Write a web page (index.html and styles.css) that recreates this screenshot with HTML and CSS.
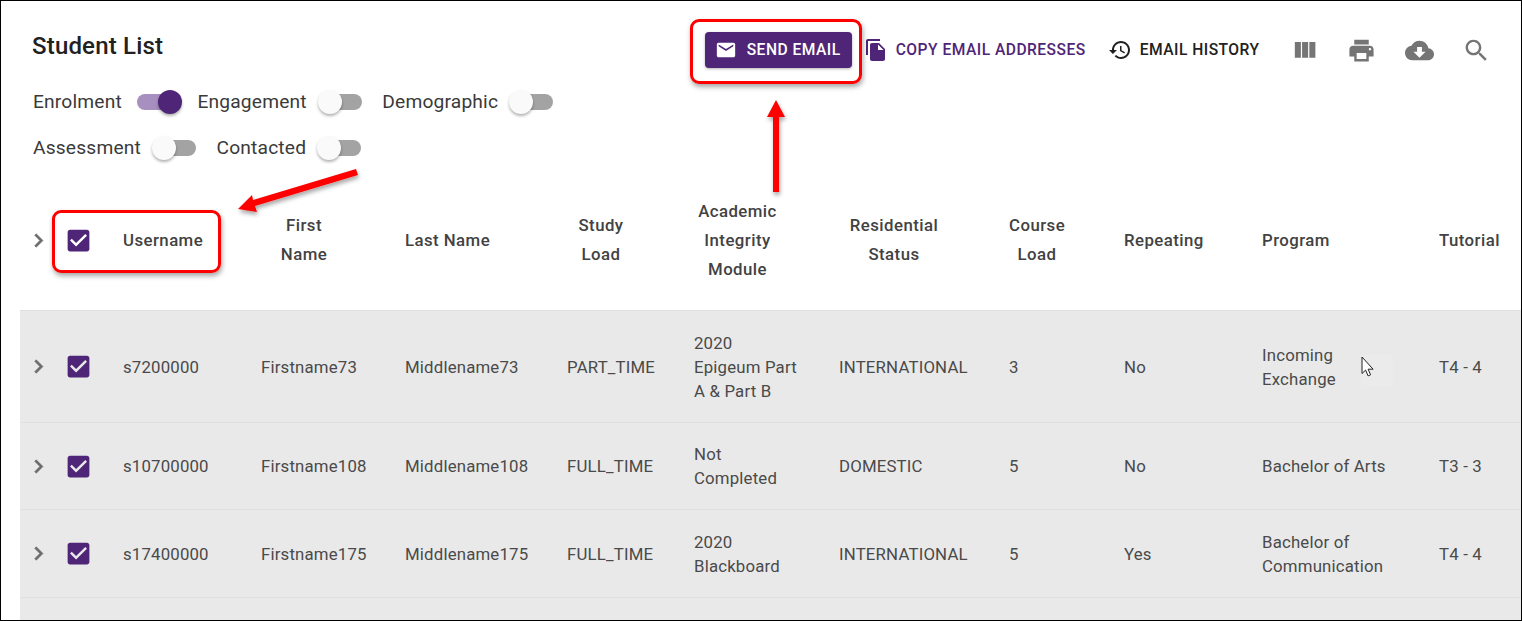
FILE: index.html
```html
<!DOCTYPE html>
<html lang="en">
<head>
<meta charset="utf-8">
<title>Student List</title>
<link rel="stylesheet" href="styles.css">
</head>
<body>
<svg class="defs" width="0" height="0" aria-hidden="true">
  <symbol id="i-check" viewBox="0 0 24 24"><path d="M19 3H5c-1.11 0-2 .9-2 2v14c0 1.1.89 2 2 2h14c1.11 0 2-.9 2-2V5c0-1.1-.89-2-2-2zm-9 14l-5-5 1.41-1.41L10 14.17l7.59-7.59L19 8l-9 9z"/></symbol>
  <symbol id="i-chev" viewBox="0 0 24 24"><path d="M10 6L8.59 7.41 13.17 12l-4.58 4.59L10 18l6-6z"/></symbol>
</svg>
<main class="frame">
  <section class="top">
    <div class="left">
      <h1 class="title">Student List</h1>
      <div class="toggles">
        <label class="tog">Enrolment<span class="switch on"><i></i></span></label>
        <label class="tog">Engagement<span class="switch"><i></i></span></label>
        <label class="tog">Demographic<span class="switch"><i></i></span></label>
      </div>
      <div class="toggles">
        <label class="tog">Assessment<span class="switch"><i></i></span></label>
        <label class="tog">Contacted<span class="switch"><i></i></span></label>
      </div>
    </div>
    <div class="actions">
      <button class="btn primary"><svg viewBox="0 0 24 24"><path d="M20 4H4c-1.1 0-1.99.9-1.99 2L2 18c0 1.1.9 2 2 2h16c1.1 0 2-.9 2-2V6c0-1.1-.9-2-2-2zm0 4l-8 5-8-5V6l8 5 8-5v2z"/></svg>SEND EMAIL</button>
      <button class="btn copy"><svg viewBox="0 0 24 24"><path d="M16 1H4c-1.1 0-2 .9-2 2v14h2V3h12V1zm-1 4l6 6v10c0 1.1-.9 2-2 2H7.99C6.89 23 6 22.1 6 21l.01-14c0-1.1.89-2 1.99-2h7zm-1 7h5.5L14 6.5V12z"/></svg>COPY EMAIL ADDRESSES</button>
      <button class="btn hist"><svg viewBox="0 0 24 24"><path d="M13 3c-4.97 0-9 4.03-9 9H1l3.89 3.89.07.14L9 12H6c0-3.87 3.13-7 7-7s7 3.13 7 7-3.13 7-7 7c-1.93 0-3.68-.79-4.94-2.06l-1.42 1.42C8.27 19.99 10.51 21 13 21c4.97 0 9-4.03 9-9s-4.03-9-9-9zm-1 5v5l4.28 2.54.72-1.21-3.5-2.08V8H12z"/></svg>EMAIL HISTORY</button>
      <div class="tools">
        <svg viewBox="0 0 24 24"><path d="M10 18h5V5h-5v13zm-6 0h5V5H4v13zM16 5v13h5V5h-5z"/></svg>
        <svg viewBox="0 0 24 24"><path d="M19 8H5c-1.66 0-3 1.34-3 3v6h4v4h12v-4h4v-6c0-1.66-1.34-3-3-3zm-3 11H8v-5h8v5zm3-7c-.55 0-1-.45-1-1s.45-1 1-1 1 .45 1 1-.45 1-1 1zm-1-9H6v4h12V3z"/></svg>
        <svg viewBox="0 0 24 24"><path d="M19.35 10.04C18.67 6.59 15.64 4 12 4 9.11 4 6.6 5.64 5.35 8.04 2.34 8.36 0 10.91 0 14c0 3.31 2.69 6 6 6h13c2.76 0 5-2.24 5-5 0-2.64-2.05-4.78-4.65-4.96zM17 13l-5 5-5-5h3V9h4v4h3z"/></svg>
        <svg viewBox="0 0 24 24"><path d="M15.5 14h-.79l-.28-.27C15.41 12.59 16 11.11 16 9.5 16 5.91 13.09 3 9.5 3S3 5.91 3 9.5 5.91 16 9.5 16c1.61 0 3.09-.59 4.23-1.57l.27.28v.79l5 4.99L20.49 19l-4.99-5zm-6 0C7.01 14 5 11.99 5 9.5S7.01 5 9.5 5 14 7.01 14 9.5 11.99 14 9.5 14z"/></svg>
      </div>
    </div>
  </section>

  <table class="grid">
    <colgroup>
      <col class="c-exp"><col class="c-chk"><col class="c-user"><col class="c-first"><col class="c-last"><col class="c-load"><col class="c-acad"><col class="c-res"><col class="c-course"><col class="c-rep"><col class="c-prog"><col class="c-tut">
    </colgroup>
    <thead>
      <tr>
        <th class="exp"><svg class="chev"><use href="#i-chev"/></svg></th>
        <th class="chk"><svg class="box"><use href="#i-check"/></svg></th>
        <th>Username</th>
        <th><span class="hd w-first">First<br>Name</span></th>
        <th>Last Name</th>
        <th><span class="hd w-load">Study Load</span></th>
        <th><span class="hd w-acad">Academic Integrity Module</span></th>
        <th><span class="hd w-res">Residential Status</span></th>
        <th><span class="hd w-course">Course Load</span></th>
        <th>Repeating</th>
        <th>Program</th>
        <th>Tutorial</th>
      </tr>
    </thead>
    <tbody>
      <tr class="r1">
        <td class="exp"><svg class="chev"><use href="#i-chev"/></svg></td>
        <td class="chk"><svg class="box"><use href="#i-check"/></svg></td>
        <td>s7200000</td><td>Firstname73</td><td>Middlename73</td><td>PART_TIME</td>
        <td>2020<br>Epigeum Part<br>A &amp; Part B</td><td>INTERNATIONAL</td><td>3</td><td>No</td><td>Incoming Exchange</td><td>T4 - 4</td>
      </tr>
      <tr class="r2">
        <td class="exp"><svg class="chev"><use href="#i-chev"/></svg></td>
        <td class="chk"><svg class="box"><use href="#i-check"/></svg></td>
        <td>s10700000</td><td>Firstname108</td><td>Middlename108</td><td>FULL_TIME</td>
        <td>Not Completed</td><td>DOMESTIC</td><td>5</td><td>No</td><td>Bachelor of Arts</td><td>T3 - 3</td>
      </tr>
      <tr class="r3">
        <td class="exp"><svg class="chev"><use href="#i-chev"/></svg></td>
        <td class="chk"><svg class="box"><use href="#i-check"/></svg></td>
        <td>s17400000</td><td>Firstname175</td><td>Middlename175</td><td>FULL_TIME</td>
        <td>2020 Blackboard</td><td>INTERNATIONAL</td><td>5</td><td>Yes</td><td>Bachelor of Communication</td><td>T4 - 4</td>
      </tr>
      <tr class="r4"><td colspan="12"></td></tr>
    </tbody>
  </table>

  <div class="callout call-send"></div>
  <div class="callout call-user"></div>
  <svg class="overlay" viewBox="0 0 1522 621" aria-hidden="true">
    <defs>
      <filter id="sh" x="-30%" y="-30%" width="160%" height="160%"><feDropShadow dx="1" dy="3" stdDeviation="2" flood-color="#000" flood-opacity=".35"/></filter>
    </defs>
    <g fill="#fe0000" filter="url(#sh)">
      <polygon points="773,192 779,192 779,117 785,117 776,100 767,117 773,117"/>
      <polygon points="356,169 358,175 255,206 257,212 238,209 252,195 253,200"/>
    </g>
    <rect x="1361" y="355" width="32" height="32" fill="#ebebeb"/>
    <path d="M1362 357v16.500l3.600-3.400 2.500 5.800 2.500-1.100-2.500-5.600h5z" fill="#fff" stroke="#222" stroke-width="1"/>
  </svg>
</main>
</body>
</html>
```

FILE: styles.css
```css
* { box-sizing: border-box; }
html, body { margin: 0; height: 100%; background: #fff; }
.defs { position: absolute; }
.frame {
  position: relative;
  width: 1522px;
  height: 621px;
  border: 1px solid #000;
  overflow: hidden;
  font-family: Roboto, "Liberation Sans", sans-serif;
  color: #212121;
}
.top {
  display: flex;
  justify-content: space-between;
  height: 179px;
  padding-left: 31px;
}
.title {
  margin: 28px 0 0;
  height: 34px;
  font-size: 24px;
  line-height: 34px;
  font-weight: 500;
  letter-spacing: .18px;
}
.toggles {
  display: flex;
  align-items: center;
  height: 24px;
  margin-top: 22px;
  padding-left: 1px;
  gap: 20.500px;
}
.toggles:first-of-type { margin-top: 27px; }
.tog {
  display: flex;
  align-items: center;
  gap: 15px;
  font-size: 19.200px;
  line-height: 24px;
  color: #3a3a3a;
  letter-spacing: .18px;
}
.switch {
  position: relative;
  display: block;
  width: 40px;
  height: 16px;
  border-radius: 8px;
  background: #a3a3a3;
}
.switch i {
  position: absolute;
  top: -4px;
  left: -4px;
  width: 24px;
  height: 24px;
  border-radius: 50%;
  background: #fafafa;
  box-shadow: 0 2px 3px rgba(0,0,0,.3);
}
.switch.on { background: #a78fbf; }
.switch.on i { left: 21px; background: #4f2577; }

.actions {
  display: flex;
  align-items: flex-start;
  padding-top: 31px;
  padding-right: 30px;
}
.btn {
  display: flex;
  align-items: center;
  height: 36px;
  padding: 0;
  border: 0;
  background: none;
  font: 500 15.600px/36px Roboto, "Liberation Sans", sans-serif;
  letter-spacing: .48px;
  white-space: nowrap;
}
.btn svg { width: 24px; height: 24px; fill: currentColor; }
.primary {
  width: 147px;
  padding-left: 10px;
  gap: 10px;
  color: #fff;
  background: #4f2577;
  border-radius: 4px;
  box-shadow: 0 1px 3px rgba(0,0,0,.3);
}
.primary svg { width: 22px; height: 22px; }
.copy { margin-left: 12px; gap: 8px; color: #4f2577; }
.hist { margin-left: 22px; gap: 8px; color: #212121; }
.tools {
  display: flex;
  align-items: center;
  gap: 28.500px;
  height: 36px;
  margin-left: 30px;
}
.tools svg { width: 29px; height: 29px; fill: #757575; }

.grid {
  table-layout: fixed;
  border-collapse: collapse;
  width: 1501px;
  margin-left: 19px;
  font-size: 16.800px;
  line-height: 24px;
  letter-spacing: .18px;
}
.c-exp { width: 37px; } .c-chk { width: 50px; } .c-user { width: 138px; }
.c-first { width: 144px; } .c-last { width: 162px; } .c-load { width: 127px; }
.c-acad { width: 145px; } .c-res { width: 170px; } .c-course { width: 115px; }
.c-rep { width: 138px; } .c-prog { width: 177px; } .c-tut { width: 98px; }
th {
  height: 130px;
  padding: 0 0 9px 16px;
  text-align: left;
  font-weight: 500;
  color: #424242;
  line-height: 29px;
  letter-spacing: .45px;
  border-bottom: 1px solid #e0e0e0;
}
.hd { display: block; text-align: center; }
.w-first { width: 86px; } .w-load { width: 68px; } .w-acad { width: 87px; }
.w-res { width: 110px; } .w-course { width: 56px; }
td {
  padding: 2px 16px 0;
  color: #4a4a4a;
  background: #e9e9e9;
  border-bottom: 1px solid #e0e0e0;
}
th.exp, td.exp, th.chk, td.chk { line-height: 0; padding-left: 0; padding-right: 0; }
td.exp, td.chk { padding-top: 0; }
.chev { width: 27px; height: 27px; margin-left: 5px; fill: #6b6b6b; stroke: #6b6b6b; stroke-width: .5; vertical-align: middle; }
.box { width: 29px; height: 29px; margin-left: 7px; fill: #4f2577; vertical-align: middle; }
.r1 td { height: 112px; }
.r2 td { height: 87px; padding-top: 0; }
.r2 td.exp, .r2 td.chk { padding-top: 1px; }
.r3 td { height: 88px; }
.r4 td { height: 23px; border-bottom: 0; }

.callout {
  position: absolute;
  border: 3px solid #fe0000;
  border-radius: 9px;
  box-shadow: 1px 3px 5px rgba(0,0,0,.35);
}
.call-send { left: 689px; top: 18px; width: 172px; height: 65px; }
.call-user { left: 51px; top: 209px; width: 169px; height: 63px; }
.overlay { position: absolute; left: -1px; top: -1px; width: 1522px; height: 621px; pointer-events: none; }
```
